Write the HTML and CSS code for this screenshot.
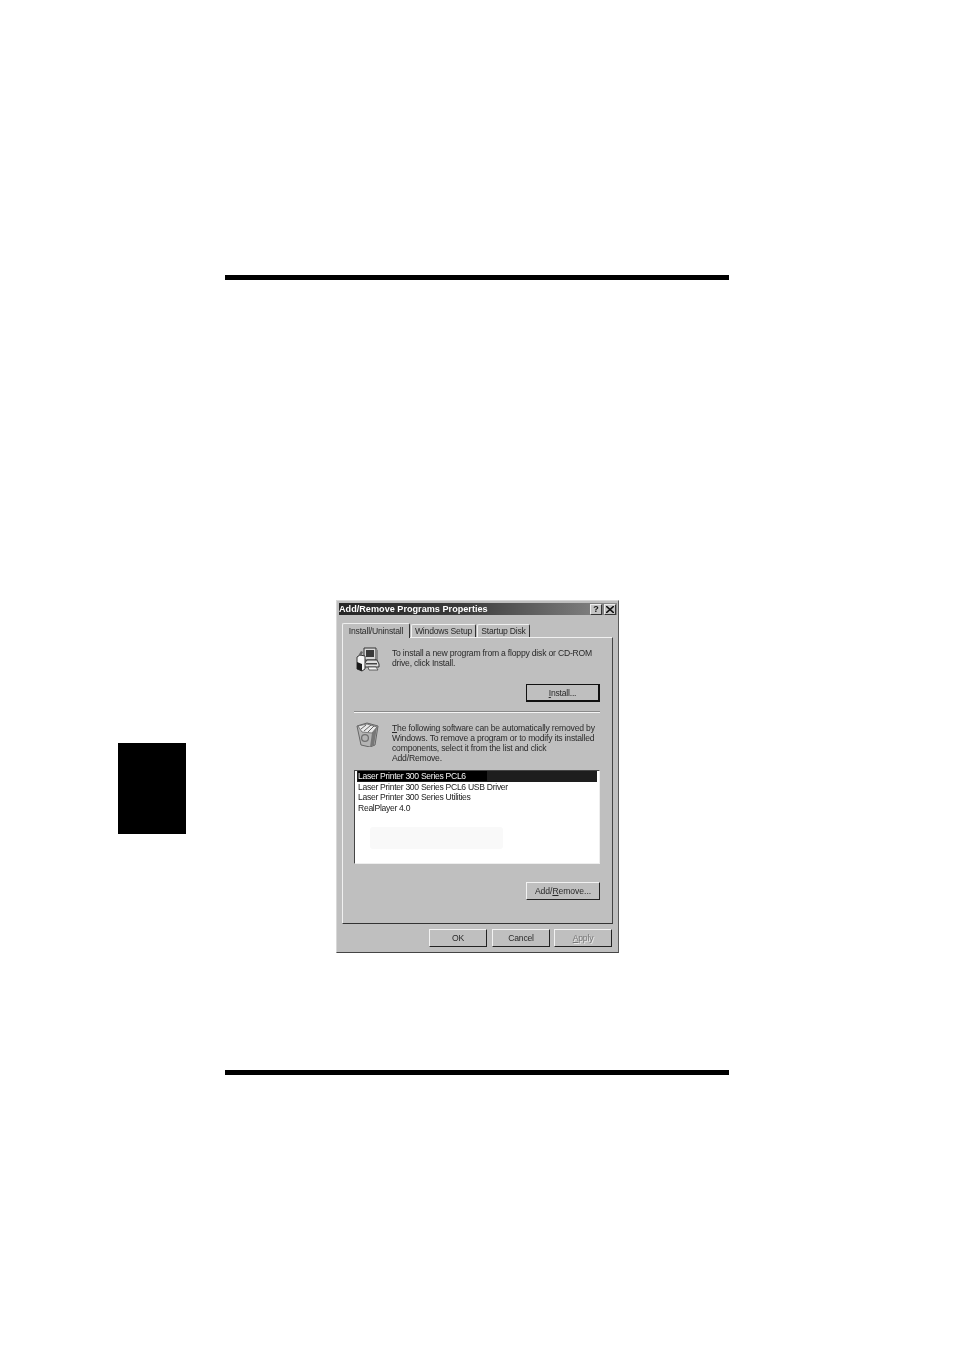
FILE: index.html
```html
<!DOCTYPE html>
<html lang="en">
<head>
<meta charset="utf-8">
<title>Add/Remove Programs Properties</title>
<link rel="stylesheet" href="styles.css">
</head>
<body>
<div class="page">
  <div class="rule rule-top"></div>
  <div class="middle">
    <div class="side-tab"></div>
    <div class="dialog">
      <div class="titlebar">
        <span class="title">Add/Remove Programs Properties</span>
        <span class="cap-btn cap-help">?</span>
        <span class="cap-btn cap-close">
          <svg viewBox="0 0 8 7" width="8" height="7"><path d="M0 0L8 7M8 0L0 7" stroke="#111" stroke-width="1.6" fill="none"/></svg>
        </span>
      </div>
      <div class="tabs">
        <span class="tab tab-active">Install/Uninstall</span>
        <span class="tab tab-setup">Windows Setup</span>
        <span class="tab tab-disk">Startup Disk</span>
      </div>
      <div class="panel">
        <div class="info info-top">
          <svg class="icon" viewBox="0 0 26 26" width="26" height="26">
            <path d="M9 2h12v12H9z" fill="#d8d8d8" stroke="#333"/>
            <path d="M11 4h8v7h-8z" fill="#3a3a3a"/>
            <path d="M21 3l2 1v10h-2z" fill="#888"/>
            <path d="M12 14h10l2 4v3H9v-3z" fill="#dedede" stroke="#333"/>
            <path d="M11 17h11v1.5H11z" fill="#444"/>
            <path d="M13 21h8l2 3H14z" fill="#f2f2f2" stroke="#444" stroke-width=".8"/>
            <path d="M2 11l3-2 5 1v13l-3 2-5-2z" fill="#f4f4f4" stroke="#333"/>
            <path d="M2 16l5 2v7l-5-2z" fill="#1a1a1a"/>
            <path d="M3 10l3-5 2 1-2 4z" fill="#666"/>
          </svg>
          <p class="info-text">To install a new program from a floppy disk or CD-ROM<br>drive, click Install.</p>
        </div>
        <div class="btn-row btn-row-install">
          <span class="btn btn-default"><u>I</u>nstall...</span>
        </div>
        <div class="separator"></div>
        <div class="info info-bottom">
          <svg class="icon" viewBox="0 0 26 26" width="26" height="26">
            <path d="M2 5l10-3 11 3-3 19-5 2-9-2z" fill="#b4b4b4" stroke="#666"/>
            <path d="M3 5l9-2 10 3-5 6-10-1z" fill="#e8e8e8" stroke="#666" stroke-width=".8"/>
            <path d="M9 10l7-6M13 11l6-6M6 8l5-4" stroke="#555" stroke-width=".9"/>
            <path d="M17 12l5-6-3 18-4 2z" fill="#777"/>
            <circle cx="10" cy="17" r="3.4" fill="none" stroke="#707070" stroke-width="1.3"/>
          </svg>
          <p class="info-text"><u>T</u>he following software can be automatically removed by<br>Windows. To remove a program or to modify its installed<br>components, select it from the list and click<br>Add/Remove.</p>
        </div>
        <div class="list">
          <div class="row row-selected"><span class="row-label">Laser Printer 300 Series PCL6</span></div>
          <div class="row">Laser Printer 300 Series PCL6 USB Driver</div>
          <div class="row">Laser Printer 300 Series Utilities</div>
          <div class="row">RealPlayer 4.0</div>
          <div class="smudge"></div>
        </div>
        <div class="btn-row btn-row-remove">
          <span class="btn btn-remove">Add/<u>R</u>emove...</span>
        </div>
      </div>
      <div class="footer">
        <span class="btn btn-foot">OK</span>
        <span class="btn btn-foot">Cancel</span>
        <span class="btn btn-foot btn-disabled"><u>A</u>pply</span>
      </div>
    </div>
  </div>
  <div class="rule"></div>
</div>
</body>
</html>
```

FILE: styles.css
```css
* { box-sizing: border-box; }

html, body {
  margin: 0;
  padding: 0;
  background: #fff;
}

.page {
  width: 954px;
  height: 1351px;
  padding-top: 275px;
  overflow: hidden;
}

.rule {
  width: 504px;
  height: 5px;
  margin-left: 225px;
  background: #000;
}

.middle {
  display: flex;
  align-items: flex-start;
  height: 790px;
  padding-left: 118px;
}

.side-tab {
  width: 68px;
  height: 91px;
  margin-top: 463px;
  background: #000;
}

.dialog {
  width: 283px;
  height: 353px;
  margin-top: 320px;
  margin-left: 150px;
  padding: 2px 4px 0 2px;
  background: #bfbfbf;
  border-top: 1px solid #d8d8d8;
  border-left: 1px solid #d8d8d8;
  border-right: 1px solid #5a5a5a;
  border-bottom: 1px solid #444;
  font-family: "Liberation Sans", Arial, sans-serif;
  font-size: 8.6px;
  letter-spacing: -0.2px;
  line-height: 10px;
  color: #2a2a2a;
  filter: grayscale(1) blur(0.35px);
}

.titlebar {
  display: flex;
  align-items: center;
  height: 12px;
  width: 278px;
  padding: 0 1px 0 0;
  background: linear-gradient(90deg, #262626 0%, #3c3c3c 45%, #8a8a8a 100%);
}

.title {
  flex: 1;
  color: #fff;
  font-weight: 700;
  font-size: 9.1px;
  letter-spacing: 0.02px;
  white-space: nowrap;
}

.cap-btn {
  display: flex;
  align-items: center;
  justify-content: center;
  width: 12px;
  height: 11px;
  background: #c4c4c4;
  border: 1px solid;
  border-color: #eee #333 #333 #eee;
  color: #111;
  font-weight: 700;
  font-size: 9px;
}

.cap-close {
  margin-left: 2px;
}

.tabs {
  display: flex;
  align-items: flex-end;
  height: 22px;
  margin-left: 3px;
}

.tab {
  display: flex;
  align-items: center;
  justify-content: center;
  height: 13px;
  background: #bfbfbf;
  border: 1px solid #efefef;
  border-bottom: 0;
  border-right-color: #333;
  border-radius: 2px 2px 0 0;
  white-space: nowrap;
}

.tab-active {
  width: 68px;
  height: 15px;
  position: relative;
  top: 1px;
  z-index: 1;
}

.tab-setup {
  width: 65px;
  margin-left: 1px;
}

.tab-disk {
  width: 53px;
  margin-left: 1px;
}

.panel {
  width: 271px;
  height: 287px;
  margin-left: 3px;
  padding: 10px 12px 0 11px;
  border: 1px solid;
  border-color: #f0f0f0 #444 #333 #f0f0f0;
}

.info {
  display: flex;
}

.icon {
  flex: none;
  margin: -2px 0 -4px 1px;
}

.info-text {
  margin: 0 0 0 11px;
  white-space: nowrap;
}

.btn-row {
  display: flex;
  justify-content: flex-end;
}

.btn-row-install {
  margin-top: 16px;
}

.btn-row-remove {
  margin-top: 18px;
}

.btn {
  display: flex;
  align-items: center;
  justify-content: center;
  width: 74px;
  height: 18px;
  border: 1px solid;
  border-color: #f2f2f2 #222 #222 #f2f2f2;
  white-space: nowrap;
}

.btn-default {
  border: 2px solid #111;
  border-top-width: 1px;
  border-left-width: 1px;
}

.btn-remove {
  letter-spacing: -0.05px;
}

.separator {
  height: 2px;
  margin-top: 9px;
  background: linear-gradient(#8a8a8a 0 1px, #f4f4f4 1px);
}

.info-bottom {
  margin-top: 10px;
}

.list {
  position: relative;
  height: 94px;
  margin-top: 7px;
  padding: 0 2px;
  background: #fff;
  border: 1px solid;
  border-color: #444 #eee #eee #444;
}

.row {
  height: 10.3px;
  padding-left: 1px;
  line-height: 10.3px;
  letter-spacing: -0.3px;
  white-space: nowrap;
  color: #222;
}

.row-selected {
  height: 11px;
  background: #1e1e1e;
  color: #f4f4f4;
}

.row-label {
  display: inline-block;
  width: 129px;
  background: #000;
}

.smudge {
  position: absolute;
  left: 15px;
  top: 56px;
  width: 133px;
  height: 22px;
  background: #f9f9f9;
  border-radius: 3px;
}

.footer {
  display: flex;
  justify-content: flex-end;
  gap: 5px;
  width: 273px;
  margin-top: 5px;
}

.btn-foot {
  width: 58px;
}

.btn-disabled {
  margin-left: -1px;
  color: #777;
  text-shadow: 1px 1px 0 #e8e8e8;
}
```
